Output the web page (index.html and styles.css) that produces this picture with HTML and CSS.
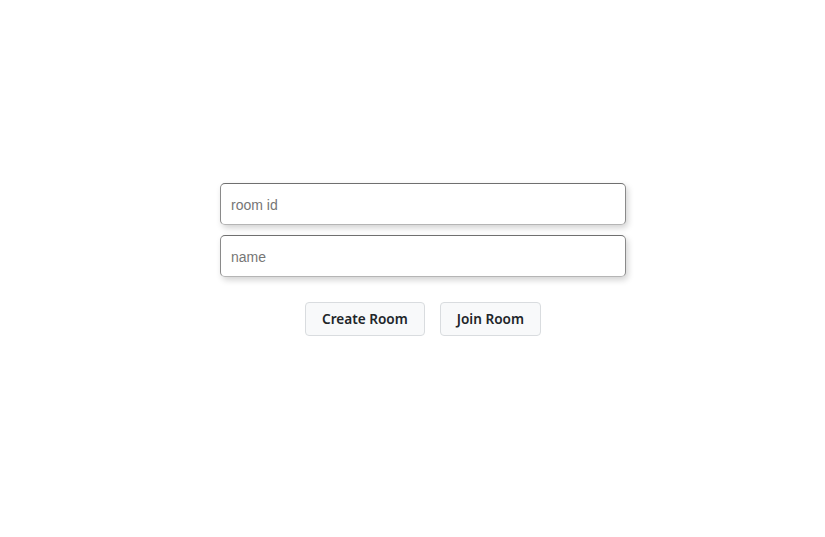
FILE: index.html
```html
<!DOCTYPE html>
<html>
<head>
<meta charset="utf-8">
<link rel="stylesheet" href="styles.css">
</head>
<body>
<main class="page">
  <form class="join-form">
    <input class="field" type="text" placeholder="room id">
    <input class="field" type="text" placeholder="name">
    <div class="actions">
      <button class="btn" type="button">Create Room</button>
      <button class="btn" type="button">Join Room</button>
    </div>
  </form>
</main>
</body>
</html>
```
FILE: styles.css
```css
html, body {
  margin: 0;
  padding: 0;
  background: #fff;
}
.page {
  padding-top: 183px;
  padding-left: 220px;
}
.join-form {
  width: 406px;
  display: flex;
  flex-direction: column;
  gap: 10px;
  margin: 0;
}
.field {
  box-sizing: border-box;
  width: 406px;
  height: 42px;
  margin: 0;
  padding: 1px 10px 0;
  border: 1px solid #8a8a8a;
  border-top-color: #6f6f6f;
  border-bottom-color: #b5b5b5;
  border-radius: 5px;
  box-shadow: 2px 3px 6px rgba(0, 0, 0, 0.18);
  font-family: "Liberation Sans", Arial, sans-serif;
  font-size: 14px;
  color: #333;
  background: #fff;
  outline: none;
}
.field::placeholder {
  color: #767676;
}
.actions {
  display: flex;
  justify-content: center;
  gap: 15px;
  margin-top: 15px;
}
.btn {
  box-sizing: border-box;
  height: 34px;
  padding: 0 16px 2px;
  background: #f8f9fa;
  border: 1px solid #d9dcdf;
  border-radius: 4px;
  font-family: "Noto Sans", "DejaVu Sans", sans-serif;
  font-weight: 600;
  font-size: 13.6px;
  color: #212529;
  cursor: pointer;
}
```
